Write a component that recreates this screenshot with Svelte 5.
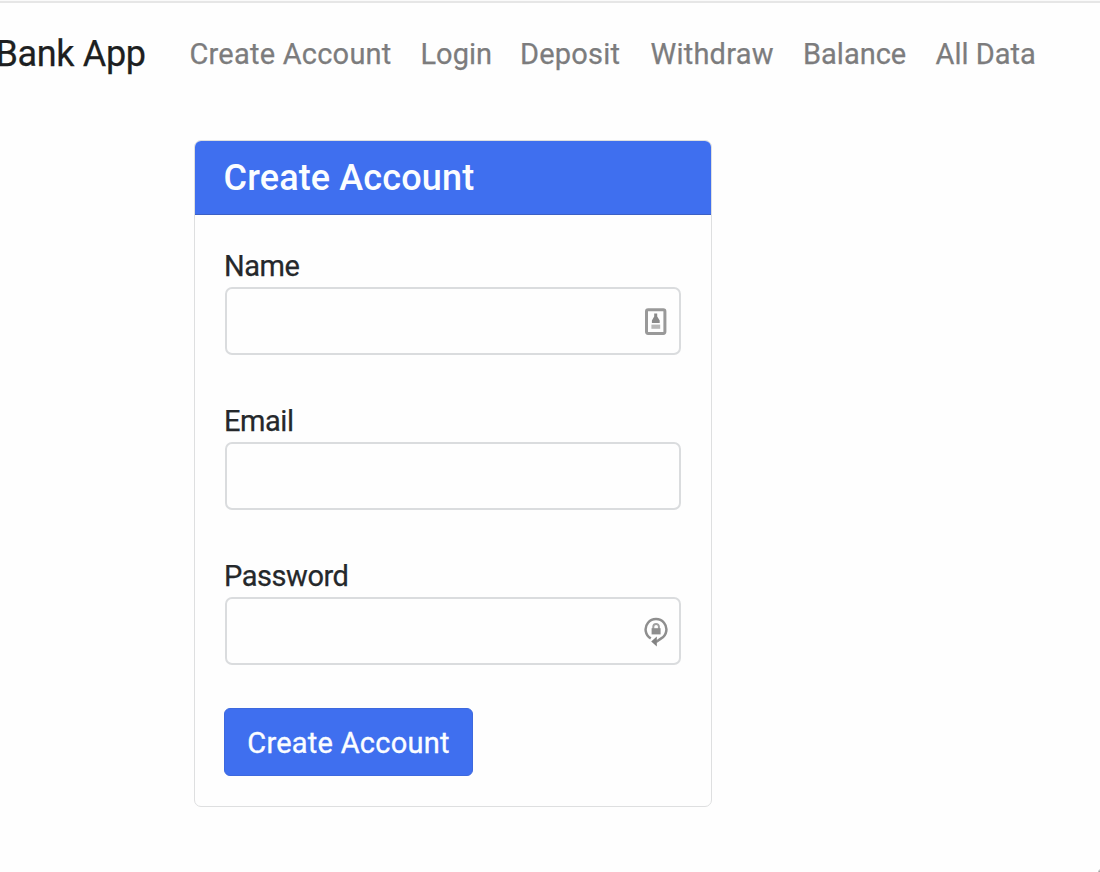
<script>
  const links = ['Create Account', 'Login', 'Deposit', 'Withdraw', 'Balance', 'All Data'];
  const fields = [
    { id: 'name', label: 'Name', type: 'text', icon: 'contact' },
    { id: 'email', label: 'Email', type: 'email', icon: '' },
    { id: 'password', label: 'Password', type: 'password', icon: 'lock' }
  ];
</script>

<div class="page">
  <nav>
    <a class="brand" href="#home">Bank App</a>
    <div class="links">
      {#each links as link}
        <a href="#{link}">{link}</a>
      {/each}
    </div>
  </nav>

  <form class="card">
    <h1>Create Account</h1>
    <div class="body">
      {#each fields as field}
        <div class="field">
          <label for={field.id}>{field.label}</label>
          <div class="control">
            <input id={field.id} type={field.type} />
            {#if field.icon === 'contact'}
              <svg width="24" height="30" viewBox="0 0 24 30">
                <rect x="2.5" y="2.8" width="18.4" height="23.6" rx="1.6" fill="none" stroke="#999" stroke-width="3" />
                <path d="M10.2 6.6h3v3l2.5 3.8v2.6H7.9v-2.6l2.3-3.8z" fill="#8a8a8a" />
                <rect x="7.4" y="17.6" width="8.8" height="4.2" fill="#b8b8b8" />
              </svg>
            {:else if field.icon === 'lock'}
              <svg width="24" height="30" viewBox="0 0 24 30">
                <path d="M6.8 21.4A10.4 10.4 0 1 1 17.2 21.4L12 25" fill="none" stroke="#8e8e8e" stroke-width="2.5" />
                <path d="M7.2 24.6l5.6-5v9.8z" fill="#828282" />
                <path d="M9.3 12v-2.2a2.8 2.8 0 0 1 5.6 0v2.2" fill="none" stroke="#a0a0a0" stroke-width="2" />
                <rect x="7.6" y="11.2" width="9" height="6.2" fill="#8e8e8e" />
              </svg>
            {/if}
          </div>
        </div>
      {/each}
      <button type="button">Create Account</button>
    </div>
  </form>
  <span class="corner"></span>
</div>

<style>
  :global(body) { margin: 0; background: #fefefe; }
  .page {
    position: relative;
    box-sizing: border-box;
    height: 872px;
    overflow: hidden;
    border-top: 1px solid #fafafa;
    background: #fefefe;
    color: #25282b;
    font: 29px/44px Roboto, sans-serif;
    -webkit-text-stroke: 0.25px currentColor;
  }
  nav {
    display: flex;
    align-items: center;
    box-sizing: border-box;
    height: 103px;
    border-top: 2px solid #e6e6e6;
  }
  a { color: #7c7c7d; text-decoration: none; white-space: nowrap; }
  .brand { flex: 0 0 193.5px; margin-left: -4.5px; color: #1d1f21; font-size: 36px; letter-spacing: -0.35px; }
  .links { display: grid; grid-template-columns: 231px 99.5px 130.5px 152.5px 132.5px auto; margin-left: 0.5px; }
  .links a:first-child, .links a:nth-child(3), .links a:nth-child(4) { letter-spacing: 0.22px; }
  .card {
    box-sizing: border-box;
    width: 518px;
    height: 667px;
    margin: 36px 0 0 194px;
    border: 1.5px solid #dedfe0;
    border-radius: 7px;
    overflow: hidden;
  }
  h1 {
    box-sizing: border-box;
    height: 74px;
    margin: 0;
    padding: 0 28.5px;
    border-bottom: 1.5px solid #3c60c4;
    background: #3f6fef;
    color: #fbfdff;
    font-size: 36px;
    font-weight: 500;
    letter-spacing: 0.15px;
    line-height: 74px;
    -webkit-text-stroke: 0;
  }
  .body { padding: 29px 29px 0; }
  .field { height: 155px; }
  label { display: block; height: 43px; letter-spacing: -0.45px; }
  .control { position: relative; height: 68px; margin-left: 1px; }
  input {
    box-sizing: border-box;
    width: 456px;
    height: 68px;
    padding: 0 60px 0 20px;
    border: 2px solid #dadcde;
    border-radius: 7px;
    background: #fefefe;
    font: inherit;
    outline: none;
  }
  svg { position: absolute; left: 419px; top: 19.5px; }
  button {
    display: block;
    width: 249px;
    height: 68px;
    margin-top: -1px;
    padding: 2px 0 0;
    border: 1px solid #3d69de;
    border-radius: 6px;
    background: #3f6fef;
    color: #fbfdff;
    font: inherit;
    letter-spacing: 0.25px;
    -webkit-text-stroke: 0.35px currentColor;
  }
  .corner {
    position: absolute;
    right: 0;
    bottom: 0;
    width: 2px;
    height: 3px;
    background: linear-gradient(135deg, #fefefe 20%, #888);
  }
</style>
